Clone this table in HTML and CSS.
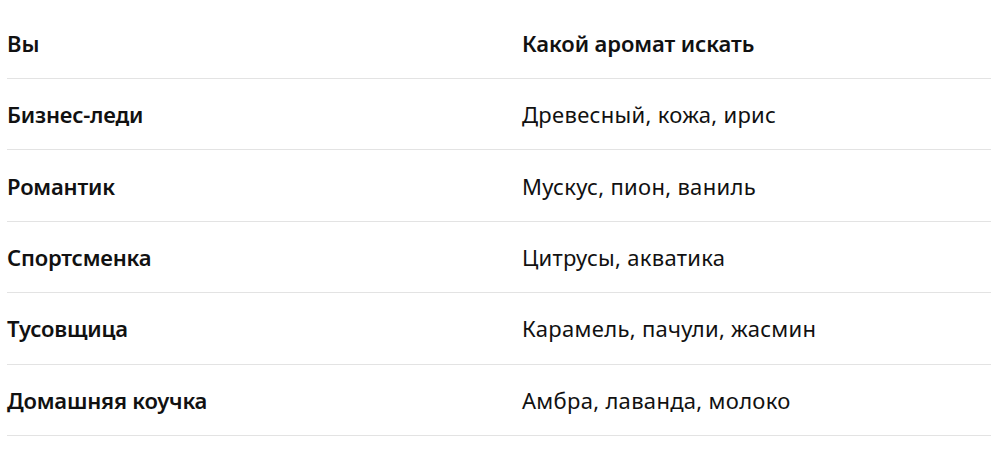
FILE: index.html
```html
<!DOCTYPE html>
<html lang="ru">
<head>
<meta charset="utf-8">
<link rel="stylesheet" href="styles.css">
</head>
<body>
<table class="scent-table">
  <thead>
    <tr><th class="col-who">Вы</th><th class="col-scent">Какой аромат искать</th></tr>
  </thead>
  <tbody>
    <tr><td class="col-who">Бизнес-леди</td><td class="col-scent">Древесный, кожа, ирис</td></tr>
    <tr><td class="col-who">Романтик</td><td class="col-scent">Мускус, пион, ваниль</td></tr>
    <tr><td class="col-who">Спортсменка</td><td class="col-scent">Цитрусы, акватика</td></tr>
    <tr><td class="col-who">Тусовщица</td><td class="col-scent">Карамель, пачули, жасмин</td></tr>
    <tr><td class="col-who">Домашняя коучка</td><td class="col-scent">Амбра, лаванда, молоко</td></tr>
  </tbody>
</table>
</body>
</html>
```
FILE: styles.css
```css
html, body {
  margin: 0;
  padding: 0;
  background: #fff;
}
body {
  padding: 8px 0 0 7px;
  font-family: "Noto Sans", "Open Sans", sans-serif;
  color: #111;
  font-size: 22px;
}
.scent-table {
  border-collapse: collapse;
  width: 984px;
  table-layout: fixed;
}
.scent-table th,
.scent-table td {
  text-align: left;
  padding: 0;
  height: 70.4px;
  line-height: 30px;
  border-bottom: 1px solid #e3e3e3;
  vertical-align: middle;
  font-weight: 400;
  letter-spacing: 0.3px;
}
.scent-table th {
  font-weight: 600;
  height: 70px;
  letter-spacing: -0.1px;
}
.scent-table td.col-who {
  font-weight: 600;
  letter-spacing: -0.2px;
}
.col-who {
  width: 515px;
}
```
